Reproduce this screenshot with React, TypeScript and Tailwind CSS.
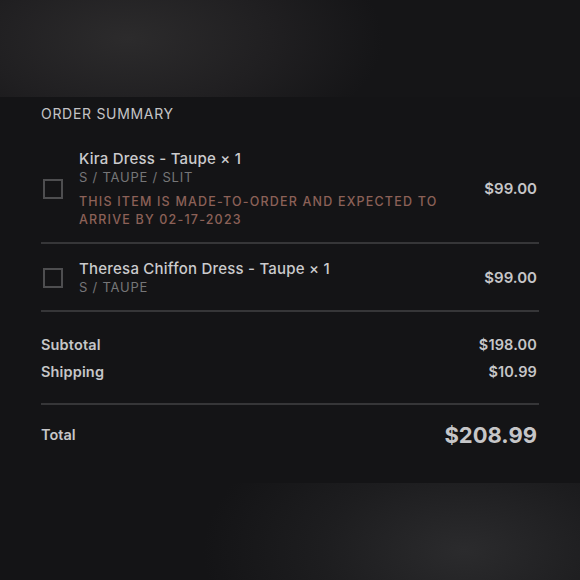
import React from "react";

const font = { fontFamily: "Inter, 'Noto Sans', sans-serif" };

interface Item {
  name: string;
  variant: string;
  note?: string;
  price: string;
}

const items: Item[] = [
  {
    name: "Kira Dress - Taupe × 1",
    variant: "S / TAUPE / SLIT",
    note: "THIS ITEM IS MADE-TO-ORDER AND EXPECTED TO ARRIVE BY 02-17-2023",
    price: "$99.00",
  },
  {
    name: "Theresa Chiffon Dress - Taupe × 1",
    variant: "S / TAUPE",
    price: "$99.00",
  },
];

function LineItem({ item, first }: { item: Item; first: boolean }) {
  return (
    <div
      className={
        "flex items-center border-b-2 border-[#363638] " +
        (first ? "pt-[0px] pb-[13px]" : "pt-[15px] pb-[13px]")
      }
    >
      <div className="ml-[2px] mr-[16px] h-[20px] w-[20px] shrink-0 border-2 border-[#4e4e50]" />
      <div className="flex-1">
        <div className="text-[15px] leading-[19px] tracking-[0.015em] font-medium text-[#cbcbcd]">{item.name}</div>
        <div className="text-[13px] leading-[19px] tracking-[0.06em] text-[#767678]">{item.variant}</div>
        {item.note && (
          <div className="mt-[6px] w-[370px] text-[12.5px] leading-[18px] tracking-[0.095em] font-medium text-[#8c6158]">
            {item.note}
          </div>
        )}
      </div>
      <div className="pr-[2px] text-[15px] font-semibold text-[#c6c6c8]">{item.price}</div>
    </div>
  );
}

export default function App() {
  return (
    <div className="flex h-[580px] w-[580px] flex-col bg-[#141416]" style={font}>
      <div className="h-[97px] bg-[radial-gradient(ellipse_55%_160%_at_22%_40%,#2c2b2c_0%,#201f21_45%,#151517_80%)]" />

      <div className="flex h-[386px] flex-col bg-[#141416] px-[41px]">
        <div className="pt-[7px] text-[14px] leading-[20px] tracking-[0.05em] text-[#c4c4c6]">ORDER SUMMARY</div>

        <div className="mt-[25px]">
          {items.map((it, i) => (
            <LineItem key={i} item={it} first={i === 0} />
          ))}
        </div>

        <div className="flex flex-col gap-[7px] border-b-2 border-[#363638] pt-[23px] pb-[21px] pr-[2px] text-[14.5px] leading-[20px] font-semibold tracking-[0.01em] text-[#c6c6c8]">
          <div className="flex justify-between">
            <span>Subtotal</span>
            <span>$198.00</span>
          </div>
          <div className="flex justify-between">
            <span>Shipping</span>
            <span>$10.99</span>
          </div>
        </div>

        <div className="flex items-center justify-between pt-[16px] pr-[2px] text-[#c6c6c8]">
          <span className="text-[14.5px] font-semibold leading-[28px]">Total</span>
          <span className="text-[22px] font-bold leading-[28px]">$208.99</span>
        </div>
      </div>

      <div className="h-[97px] bg-[radial-gradient(ellipse_45%_150%_at_80%_70%,#2b2b2d_0%,#1d1d1f_55%,#141416_100%)]" />
    </div>
  );
}
